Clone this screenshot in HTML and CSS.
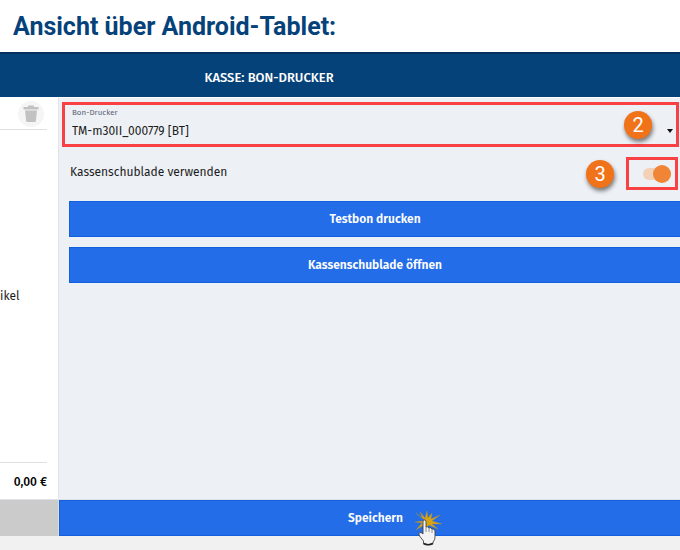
FILE: index.html
```html
<!DOCTYPE html>
<html lang="de">
<head>
    <meta charset="UTF-8">
    <meta name="viewport" content="width=device-width, initial-scale=1.0">
    <title>Kasse: Bon-Drucker</title>
    <link rel="stylesheet" href="styles.css">
</head>
<body>
    <h1 class="title">Ansicht über Android-Tablet:</h1>

    <header class="topbar">
        <h2>KASSE: BON-DRUCKER</h2>
    </header>

    <div class="content">
        <aside class="cart">
            <div class="cart-head">
                <button type="button" class="trash" aria-label="Löschen">
                    <svg width="16" height="18" viewBox="0 0 16 18" fill="#c2c2c2">
                        <path d="M5 2V1.200Q5 .5 5.700 .5H10.300Q11 .5 11 1.200V2H15.500V4.500H.5V2Z"/>
                        <path d="M2 5.500H14L12.800 16.300Q12.700 17 12 17H4Q3.300 17 3.200 16.300Z"/>
                    </svg>
                </button>
            </div>
            <div class="cart-items">ikel</div>
            <div class="cart-total">0,00 €</div>
        </aside>

        <main class="settings">
            <div class="field marked">
                <label for="printer">Bon-Drucker</label>
                <select id="printer">
                    <option>TM-m30II_000779 [BT]</option>
                </select>
                <span class="badge badge-printer">2</span>
            </div>

            <div class="drawer-row">
                <label for="drawer">Kassenschublade verwenden</label>
                <span class="badge">3</span>
                <div class="switch-box marked">
                    <input type="checkbox" id="drawer" class="switch" checked>
                </div>
            </div>

            <div class="actions">
                <button type="button" class="btn">Testbon drucken</button>
                <button type="button" class="btn">Kassenschublade öffnen</button>
            </div>
        </main>
    </div>

    <footer class="bottombar">
        <div class="bottom-left"></div>
        <button type="button" class="btn save">
            <span class="save-label">Speichern
                <svg class="pointer" width="28" height="36" viewBox="0 0 28 36">
                    <path fill="#d9a514" stroke="#a98a3c" stroke-width=".4" d="M10 9 1 2 8 8 5 1 10 7 12 0 13 7 17 2 16 8 25 4 17 10 27 13 17 13 23 18 14 14 11 17 9 14 1 19 7 12 0 11 8 10Z"/>
                    <path fill="#f4f4f4" stroke="#444" stroke-width=".9" stroke-linejoin="round" d="M8 10.500Q8 9 9.500 9T11 10.500V16Q13 15 14 17Q16 16 17 18Q20 17.500 20 20V26Q20 29 18 31V32.500Q13 35 8.500 32.500V30L4.500 25Q3 21.500 5 21.500T8 23Z"/>
                    <path stroke="#777" stroke-width=".8" d="M11 16V21M14 17V21M17 18V22"/>
                    <path fill="none" stroke="#222" stroke-width="1.500" d="M8.500 32.500Q13 35 18 32.500"/>
                </svg>
            </span>
        </button>
    </footer>
</body>
</html>
```

FILE: styles.css
```css
* {
    box-sizing: border-box;
}
html, body {
    margin: 0;
    padding: 0;
    height: 100%;
}
body {
    display: flex;
    flex-direction: column;
    padding-bottom: 14px;
    background-color: #f1f1f1;
    font-family: "Fira Sans", "Noto Sans", sans-serif;
    font-size: 12px;
    color: #1c1c1c;
    overflow: hidden;
}
button, select {
    font-family: inherit;
    font-size: inherit;
    border: none;
    margin: 0;
}
.title {
    margin: 0;
    padding: 12px 13px 10px;
    background-color: #fff;
    color: #06427a;
    font-family: Roboto, sans-serif;
    font-size: 25px;
    line-height: 30px;
    font-weight: 700;
}
.topbar {
    height: 45px;
    padding: 4px 142px 0 0;
    display: flex;
    align-items: center;
    justify-content: center;
    background-color: #06427a;
    border-top: 2px solid #03305c;
}
.topbar h2 {
    margin: 0;
    color: #fff;
    font-size: 13px;
    font-weight: 500;
}
.content {
    flex: 1;
    display: flex;
}
/* linke Spalte */
.cart {
    width: 59px;
    display: flex;
    flex-direction: column;
    background-color: #fff;
    border-right: 1px solid #e2e4e8;
}
.cart-head {
    height: 33px;
    margin-right: 11px;
    padding: 4px 3px 0 0;
    display: flex;
    justify-content: flex-end;
    align-items: flex-start;
    border-bottom: 1px solid #e0e0e0;
}
.trash {
    width: 26px;
    height: 26px;
    padding: 0;
    display: flex;
    align-items: center;
    justify-content: center;
    border-radius: 50%;
    background-color: #f5f5f5;
}
.cart-items {
    flex: 1;
    display: flex;
    align-items: center;
    line-height: 16px;
}
.cart-total {
    height: 37px;
    margin-right: 11px;
    border-top: 1px solid #e0e0e0;
    line-height: 38px;
    text-align: right;
    font-weight: 500;
    color: #000;
}
/* Einstellungen */
.settings {
    flex: 1;
    min-width: 0;
    padding: 4px 0 0;
    background-color: #edf0f5;
    border-top: 1px solid #fff;
}
.marked {
    border: 3px solid #f94144;
}
.field {
    position: relative;
    height: 45px;
    margin: 0 1px 10px 3px;
    padding: 2px 3px 0 7px;
}
.field label {
    display: block;
    font-size: 8px;
    line-height: 12px;
    color: #5b6275;
}
.field select {
    display: block;
    width: 100%;
    height: 24px;
    padding: 0;
    appearance: none;
    color: #1c1c1c;
    background: none;
}
.field::after {
    content: "";
    position: absolute;
    right: 3px;
    bottom: 11px;
    border: 3px solid transparent;
    border-top: 4px solid #111;
    border-bottom: none;
}
.badge {
    width: 28px;
    height: 28px;
    border-radius: 50%;
    background-color: #f0731a;
    box-shadow: 1px 3px 4px rgba(0, 0, 0, 0.5);
    color: #fff;
    font-family: Roboto, sans-serif;
    font-size: 20px;
    line-height: 28px;
    text-align: center;
}
.badge-printer {
    position: absolute;
    right: 24px;
    top: 6px;
}
.drawer-row {
    display: flex;
    align-items: center;
    height: 33px;
    margin: 0 2px 11px 11px;
}
.drawer-row label {
    flex: 1;
    padding-bottom: 4px;
}
.switch-box {
    width: 52px;
    height: 33px;
    margin-left: 12px;
    display: flex;
    align-items: center;
    justify-content: flex-end;
    padding-right: 4px;
}
.switch {
    appearance: none;
    position: relative;
    width: 28px;
    height: 12px;
    margin: 0;
    border-radius: 6px;
    background-color: #f3d0b8;
}
.switch::after {
    content: "";
    position: absolute;
    right: 0;
    top: -3px;
    width: 18px;
    height: 18px;
    border-radius: 50%;
    background-color: #ef8535;
}
.actions {
    display: flex;
    flex-direction: column;
    gap: 10px;
    padding-left: 10px;
}
.btn {
    height: 36px;
    padding: 0;
    background-color: #246de8;
    border: 1px solid #125fe0;
    border-right: none;
    color: #fff;
    font-weight: 600;
}
/* Fußzeile */
.bottombar {
    display: flex;
    height: 37px;
    border-top: 1px solid #dfe3e8;
}
.bottom-left {
    width: 59px;
    background-color: #cbcbcb;
    border-right: 1px solid #dedede;
}
.save {
    flex: 1;
    padding-left: 11px;
}
.save-label {
    position: relative;
}
.pointer {
    position: absolute;
    left: 100%;
    top: 0;
    margin-left: 12px;
}
```
